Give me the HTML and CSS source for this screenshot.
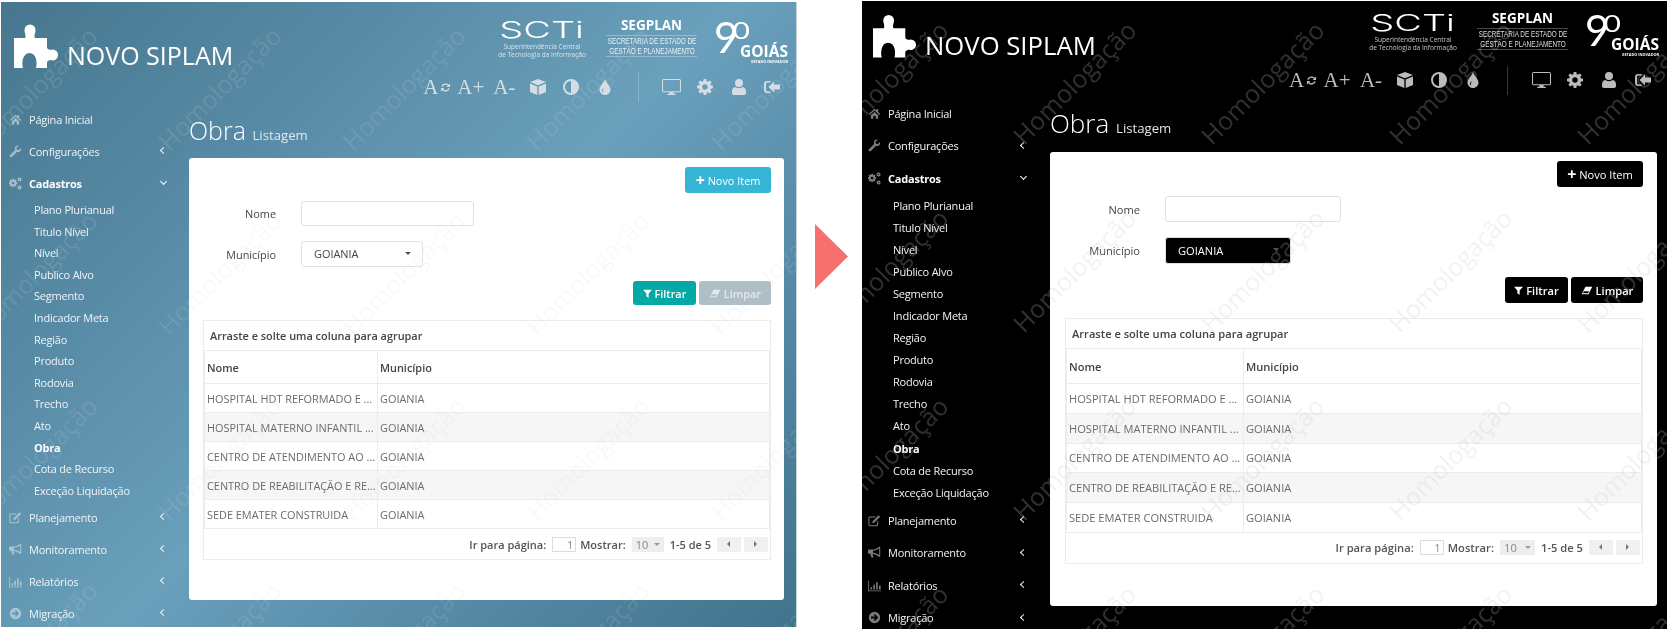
FILE: index.html
```html
<!DOCTYPE html>
<html>

<head>
    <meta charset="utf-8">
    <title>Novo Siplam - Obra</title>
    <link rel="stylesheet" href="styles.css">
</head>

<body>
    <svg class="sprite" xmlns="http://www.w3.org/2000/svg">
        <symbol id="i-puzzle" viewBox="0 0 48 44"><path d="M1 14H12C13.500 11.500 11.500 9.500 11.500 6A5.500 5.500 0 1 1 22.500 6C22.500 9.500 20.500 11.500 22 14H34V24C36.500 26.500 38 26 39.500 25.500A5.500 5.500 0 1 1 39.500 36.500C38 36 36.500 35.500 34 38V44H23C24.500 39 23.500 29 16.500 29C9.500 29 8.500 39 10 44H1Z"/></symbol>
        <symbol id="i-home" viewBox="0 0 16 16"><path d="M8 2 1 8.500 2 9.700 8 4.300 14 9.700 15 8.500 12.500 6.200V2.500H10.500V4.400ZM3.500 10 8 6 12.500 10V14.500H9.500V11H6.500V14.500H3.500Z"/></symbol>
        <symbol id="i-wrench" viewBox="0 0 16 16"><path d="M14.800 3.600 12 6.300 9.800 5.700 9.200 3.500 12 .9C9.900.200 7.300 1.500 7.200 4.200 7.200 5 7.400 5.600 7.600 6.200L1.300 12.400C.6 13.100.7 14.200 1.300 14.800 2 15.400 3 15.400 3.600 14.700L9.800 8.500C12.500 9.400 15.600 7.200 14.800 3.600Z"/></symbol>
        <symbol id="i-cogs" viewBox="0 0 16 16"><path fill-rule="evenodd" d="M6 3.500 7 3.800 8 3 9.300 4.300 8.600 5.300 9 6.300 10.200 6.500V8.300L9 8.500 8.600 9.500 9.300 10.500 8 11.800 7 11.100 6 11.500 5.800 12.700H4.200L4 11.500 3 11.100 2 11.800.7 10.500 1.400 9.500 1 8.500-.2 8.300V6.500L1 6.300 1.400 5.300.7 4.300 2 3 3 3.800 4 3.500 4.200 2.300H5.800ZM5 5.700A1.700 1.700 0 1 0 5 9.100 1.700 1.700 0 1 0 5 5.700Z"/><path fill-rule="evenodd" d="M13 .5A2.500 2.500 0 1 0 13 5.500 2.500 2.500 0 1 0 13 .5ZM13 2.200A.8.8 0 1 1 13 3.800.8.800 0 1 1 13 2.200ZM13 10.500A2.500 2.500 0 1 0 13 15.500 2.500 2.500 0 1 0 13 10.500ZM13 12.200A.8.8 0 1 1 13 13.800.8.800 0 1 1 13 12.200Z"/></symbol>
        <symbol id="i-edit" viewBox="0 0 16 16"><path d="M2.500 3H9.500L8.300 4.200H2.800C2.200 4.200 1.700 4.700 1.700 5.300V12.700C1.700 13.300 2.200 13.800 2.800 13.800H10.200C10.800 13.800 11.300 13.300 11.300 12.700V9.500L12.500 8.300V13C12.500 14.200 11.600 15 10.500 15H2.500C1.300 15 .5 14.200 .5 13V5C.5 3.800 1.300 3 2.500 3ZM13 1.500 15 3.500 8 10.500 5 11.500 6 8.500Z"/></symbol>
        <symbol id="i-bullhorn" viewBox="0 0 16 16"><path fill-rule="evenodd" d="M15 1V13L14.200 13.500C11.500 11.300 8.500 10 5.500 9.700L6.800 14H4.300L2.800 9.600H1.500C.7 9.600 0 8.900 0 8V6C0 5.100.7 4.400 1.500 4.400H5C8.500 4.400 11.500 3 14.200.6ZM13.800 3C11.500 4.600 9 5.500 6.300 5.700V8.400C9 8.700 11.500 9.600 13.800 11.200Z"/></symbol>
        <symbol id="i-chart" viewBox="0 0 16 16"><path d="M0 2H1V14H16V15H0ZM3 10H5V13H3ZM6.500 7H8.500V13H6.500ZM10 4H12V13H10ZM13.500 8H15.500V13H13.500Z"/></symbol>
        <symbol id="i-circle-right" viewBox="0 0 16 16"><path fill-rule="evenodd" d="M8 1A7 7 0 1 0 8 15 7 7 0 1 0 8 1ZM8.500 3.800 12.700 8 8.500 12.200 7.200 10.900 9 9.100H3.600V6.900H9L7.200 5.100Z"/></symbol>
        <symbol id="i-cube" viewBox="0 0 16 16"><path d="M8 0 16 3 8 6.200 0 3ZM0 4.500 7.300 7.500V16L0 13ZM16 4.500V13L8.700 16V7.500Z"/></symbol>
        <symbol id="i-contrast" viewBox="0 0 16 16"><path fill-rule="evenodd" d="M8 0A8 8 0 1 0 8 16 8 8 0 1 0 8 0ZM8 2V14A6 6 0 1 1 8 2Z"/></symbol>
        <symbol id="i-drop" viewBox="0 0 11 16"><path fill-rule="evenodd" d="M5.500 0C6.500 3.500 11 7 11 10.500 11 13.600 8.500 16 5.500 16 2.500 16 0 13.600 0 10.500 0 7 4.500 3.500 5.500 0ZM4.400 8.800C3.200 9.800 2.500 10.800 2.500 11.800 2.500 12.700 3 13.300 3.700 13.500 3.300 12.300 3.500 10.700 4.400 8.800Z"/></symbol>
        <symbol id="i-monitor" viewBox="0 0 18 16"><path fill-rule="evenodd" d="M1.500 0H16.500C17.300 0 18 .7 18 1.500V11C18 11.800 17.300 12.500 16.500 12.500H11V14H13V15H5V14H7V12.500H1.500C.7 12.500 0 11.800 0 11V1.500C0 .7.7 0 1.500 0ZM1 1V11.500H17V1Z"/></symbol>
        <symbol id="i-cog" viewBox="0 0 16 16"><path fill-rule="evenodd" d="M6.700 0H9.300L9.700 2.200 10.900 2.700 12.800 1.400 14.600 3.200 13.300 5.100 13.800 6.300 16 6.700V9.300L13.800 9.700 13.300 10.900 14.600 12.800 12.800 14.600 10.900 13.300 9.700 13.800 9.300 16H6.700L6.300 13.800 5.100 13.300 3.200 14.600 1.400 12.800 2.700 10.900 2.200 9.700 0 9.300V6.700L2.200 6.300 2.700 5.100 1.400 3.200 3.200 1.400 5.100 2.700 6.300 2.200ZM8 5.300A2.700 2.700 0 1 0 8 10.700 2.700 2.700 0 1 0 8 5.300Z"/></symbol>
        <symbol id="i-user" viewBox="0 0 14 16"><path d="M7 0A4 4 0 1 1 7 8 4 4 0 1 1 7 0ZM3.500 8C5.500 9.700 8.500 9.700 10.500 8 12.800 8.300 14 10 14 12.500V14C14 15.200 13.200 16 12 16H2C.8 16 0 15.200 0 14V12.500C0 10 1.200 8.300 3.500 8Z"/></symbol>
        <symbol id="i-signout" viewBox="0 0 16 16"><path d="M10 2.500V5.500H16V10.500H10V13.500L4.500 8ZM3 2H6.500V3.500H3.500C2.700 3.500 2 4.200 2 5V11C2 11.800 2.700 12.500 3.500 12.500H6.500V14H3C1.300 14 0 12.700 0 11V5C0 3.300 1.300 2 3 2Z"/></symbol>
        <symbol id="i-filter" viewBox="0 0 12 12"><path d="M0 1H12L7.500 6V11.500L4.500 10V6Z"/></symbol>
        <symbol id="i-eraser" viewBox="0 0 14 12"><path d="M5 1H14L9 11H0ZM1.500 9.800H8.300L9.600 7H3Z"/></symbol>
        <symbol id="i-refresh" viewBox="0 0 12 12"><path d="M6 1.500C7.500 1.500 8.700 2.100 9.500 3L11 1.700V5.500H7.200L8.600 4.100C8 3.400 7.100 3 6 3 4.500 3 3.300 3.900 2.800 5.200L1.400 4.800C2 2.900 3.800 1.500 6 1.500ZM1 6.500H4.800L3.400 7.900C4 8.600 4.900 9 6 9 7.500 9 8.700 8.100 9.200 6.800L10.600 7.200C10 9.100 8.200 10.500 6 10.500 4.500 10.500 3.300 9.900 2.500 9L1 10.300Z"/></symbol>
    </svg>

    <section class="screen screen-blue">
        <header class="topbar">
            <div class="brand">
                <svg class="brand-icon"><use href="#i-puzzle"/></svg>
                <span class="brand-name">NOVO SIPLAM</span>
            </div>
            <div class="top-right">
                <div class="logos">
                    <div class="logo-scti">
                        <div class="scti-name"><span>SCTi</span></div>
                        <div class="scti-sub">Superintendência Central<br>de Tecnologia da Informação</div>
                    </div>
                    <div class="logo-segplan">
                        <div class="segplan-name">SEGPLAN</div>
                        <div class="segplan-sub"><span>SECRETARIA DE ESTADO DE<br>GESTÃO E PLANEJAMENTO</span></div>
                    </div>
                    <div class="logo-goias">
                        <span class="goias-num">9<span>0</span></span>
                        <span class="goias-text"><b>GOIÁS</b><small>ESTADO INOVADOR</small></span>
                    </div>
                </div>
                <div class="tools">
                    <span class="tool tool-font">A<svg class="tool-refresh"><use href="#i-refresh"/></svg></span>
                    <span class="tool tool-font">A+</span>
                    <span class="tool tool-font">A-</span>
                    <span class="tool"><svg class="tool-icon"><use href="#i-cube"/></svg></span>
                    <span class="tool"><svg class="tool-icon"><use href="#i-contrast"/></svg></span>
                    <span class="tool"><svg class="tool-icon"><use href="#i-drop"/></svg></span>
                    <span class="tool"><i class="tool-sep"></i></span>
                    <span class="tool"><svg class="tool-icon tool-wide"><use href="#i-monitor"/></svg></span>
                    <span class="tool"><svg class="tool-icon"><use href="#i-cog"/></svg></span>
                    <span class="tool"><svg class="tool-icon"><use href="#i-user"/></svg></span>
                    <span class="tool"><svg class="tool-icon"><use href="#i-signout"/></svg></span>
                </div>
            </div>
        </header>

        <div class="layout">
            <nav class="sidebar">
                <a class="nav-item"><svg class="nav-icon"><use href="#i-home"/></svg>Página Inicial</a>
                <a class="nav-item has-sub"><svg class="nav-icon"><use href="#i-wrench"/></svg>Configurações</a>
                <a class="nav-item has-sub open"><svg class="nav-icon"><use href="#i-cogs"/></svg>Cadastros</a>
                <a class="sub-item">Plano Plurianual</a>
                <a class="sub-item">Titulo Nível</a>
                <a class="sub-item">Nível</a>
                <a class="sub-item">Publico Alvo</a>
                <a class="sub-item">Segmento</a>
                <a class="sub-item">Indicador Meta</a>
                <a class="sub-item">Região</a>
                <a class="sub-item">Produto</a>
                <a class="sub-item">Rodovia</a>
                <a class="sub-item">Trecho</a>
                <a class="sub-item">Ato</a>
                <a class="sub-item active">Obra</a>
                <a class="sub-item">Cota de Recurso</a>
                <a class="sub-item">Exceção Liquidação</a>
                <a class="nav-item has-sub"><svg class="nav-icon"><use href="#i-edit"/></svg>Planejamento</a>
                <a class="nav-item has-sub"><svg class="nav-icon"><use href="#i-bullhorn"/></svg>Monitoramento</a>
                <a class="nav-item has-sub"><svg class="nav-icon"><use href="#i-chart"/></svg>Relatórios</a>
                <a class="nav-item has-sub"><svg class="nav-icon"><use href="#i-circle-right"/></svg>Migração</a>
            </nav>

            <main class="content">
                <h1 class="page-title">Obra <small>Listagem</small></h1>
                <div class="card">
                    <div class="card-top">
                        <button class="btn btn-new"><b>+</b> Novo Item</button>
                    </div>
                    <div class="field field-name">
                        <label>Nome</label>
                        <div class="input"></div>
                    </div>
                    <div class="field field-city">
                        <label>Município</label>
                        <div class="select">GOIANIA</div>
                    </div>
                    <div class="form-actions">
                        <button class="btn btn-filter"><svg class="btn-icon"><use href="#i-filter"/></svg> Filtrar</button>
                        <button class="btn btn-clear"><svg class="btn-icon btn-icon-wide"><use href="#i-eraser"/></svg> Limpar</button>
                    </div>
                    <div class="grid-box">
                        <div class="group-bar">Arraste e solte uma coluna para agrupar</div>
                        <table class="grid">
                            <thead>
                                <tr><th>Nome</th><th>Município</th></tr>
                            </thead>
                            <tbody>
                                <tr><td>HOSPITAL HDT REFORMADO E ...</td><td>GOIANIA</td></tr>
                                <tr><td>HOSPITAL MATERNO INFANTIL ...</td><td>GOIANIA</td></tr>
                                <tr><td>CENTRO DE ATENDIMENTO AO ...</td><td>GOIANIA</td></tr>
                                <tr><td>CENTRO DE REABILITAÇÃO E RE...</td><td>GOIANIA</td></tr>
                                <tr><td>SEDE EMATER CONSTRUIDA</td><td>GOIANIA</td></tr>
                            </tbody>
                        </table>
                        <div class="pager">
                            <span>Ir para página:</span>
                            <span class="pager-input">1</span>
                            <span>Mostrar:</span>
                            <span class="pager-select">10</span>
                            <span class="pager-count">1-5 de 5</span>
                            <span class="pager-btn pager-prev"></span>
                            <span class="pager-btn pager-next"></span>
                        </div>
                    </div>
                </div>
            </main>
        </div>

        <div class="watermark">
            <span>Homologação</span><span>Homologação</span><span>Homologação</span><span>Homologação</span><span>Homologação</span>
            <span>Homologação</span><span>Homologação</span><span>Homologação</span><span>Homologação</span><span>Homologação</span>
            <span>Homologação</span><span>Homologação</span><span>Homologação</span><span>Homologação</span><span>Homologação</span>
            <span>Homologação</span><span>Homologação</span><span>Homologação</span><span>Homologação</span><span>Homologação</span>
        </div>
    </section>

    <div class="arrow"></div>

    <section class="screen screen-black">
        <header class="topbar">
            <div class="brand">
                <svg class="brand-icon"><use href="#i-puzzle"/></svg>
                <span class="brand-name">NOVO SIPLAM</span>
            </div>
            <div class="top-right">
                <div class="logos">
                    <div class="logo-scti">
                        <div class="scti-name"><span>SCTi</span></div>
                        <div class="scti-sub">Superintendência Central<br>de Tecnologia da Informação</div>
                    </div>
                    <div class="logo-segplan">
                        <div class="segplan-name">SEGPLAN</div>
                        <div class="segplan-sub"><span>SECRETARIA DE ESTADO DE<br>GESTÃO E PLANEJAMENTO</span></div>
                    </div>
                    <div class="logo-goias">
                        <span class="goias-num">9<span>0</span></span>
                        <span class="goias-text"><b>GOIÁS</b><small>ESTADO INOVADOR</small></span>
                    </div>
                </div>
                <div class="tools">
                    <span class="tool tool-font">A<svg class="tool-refresh"><use href="#i-refresh"/></svg></span>
                    <span class="tool tool-font">A+</span>
                    <span class="tool tool-font">A-</span>
                    <span class="tool"><svg class="tool-icon"><use href="#i-cube"/></svg></span>
                    <span class="tool"><svg class="tool-icon"><use href="#i-contrast"/></svg></span>
                    <span class="tool"><svg class="tool-icon"><use href="#i-drop"/></svg></span>
                    <span class="tool"><i class="tool-sep"></i></span>
                    <span class="tool"><svg class="tool-icon tool-wide"><use href="#i-monitor"/></svg></span>
                    <span class="tool"><svg class="tool-icon"><use href="#i-cog"/></svg></span>
                    <span class="tool"><svg class="tool-icon"><use href="#i-user"/></svg></span>
                    <span class="tool"><svg class="tool-icon"><use href="#i-signout"/></svg></span>
                </div>
            </div>
        </header>

        <div class="layout">
            <nav class="sidebar">
                <a class="nav-item"><svg class="nav-icon"><use href="#i-home"/></svg>Página Inicial</a>
                <a class="nav-item has-sub"><svg class="nav-icon"><use href="#i-wrench"/></svg>Configurações</a>
                <a class="nav-item has-sub open"><svg class="nav-icon"><use href="#i-cogs"/></svg>Cadastros</a>
                <a class="sub-item">Plano Plurianual</a>
                <a class="sub-item">Titulo Nível</a>
                <a class="sub-item">Nível</a>
                <a class="sub-item">Publico Alvo</a>
                <a class="sub-item">Segmento</a>
                <a class="sub-item">Indicador Meta</a>
                <a class="sub-item">Região</a>
                <a class="sub-item">Produto</a>
                <a class="sub-item">Rodovia</a>
                <a class="sub-item">Trecho</a>
                <a class="sub-item">Ato</a>
                <a class="sub-item active">Obra</a>
                <a class="sub-item">Cota de Recurso</a>
                <a class="sub-item">Exceção Liquidação</a>
                <a class="nav-item has-sub"><svg class="nav-icon"><use href="#i-edit"/></svg>Planejamento</a>
                <a class="nav-item has-sub"><svg class="nav-icon"><use href="#i-bullhorn"/></svg>Monitoramento</a>
                <a class="nav-item has-sub"><svg class="nav-icon"><use href="#i-chart"/></svg>Relatórios</a>
                <a class="nav-item has-sub"><svg class="nav-icon"><use href="#i-circle-right"/></svg>Migração</a>
            </nav>

            <main class="content">
                <h1 class="page-title">Obra <small>Listagem</small></h1>
                <div class="card">
                    <div class="card-top">
                        <button class="btn btn-new"><b>+</b> Novo Item</button>
                    </div>
                    <div class="field field-name">
                        <label>Nome</label>
                        <div class="input"></div>
                    </div>
                    <div class="field field-city">
                        <label>Município</label>
                        <div class="select">GOIANIA</div>
                    </div>
                    <div class="form-actions">
                        <button class="btn btn-filter"><svg class="btn-icon"><use href="#i-filter"/></svg> Filtrar</button>
                        <button class="btn btn-clear"><svg class="btn-icon btn-icon-wide"><use href="#i-eraser"/></svg> Limpar</button>
                    </div>
                    <div class="grid-box">
                        <div class="group-bar">Arraste e solte uma coluna para agrupar</div>
                        <table class="grid">
                            <thead>
                                <tr><th>Nome</th><th>Município</th></tr>
                            </thead>
                            <tbody>
                                <tr><td>HOSPITAL HDT REFORMADO E ...</td><td>GOIANIA</td></tr>
                                <tr><td>HOSPITAL MATERNO INFANTIL ...</td><td>GOIANIA</td></tr>
                                <tr><td>CENTRO DE ATENDIMENTO AO ...</td><td>GOIANIA</td></tr>
                                <tr><td>CENTRO DE REABILITAÇÃO E RE...</td><td>GOIANIA</td></tr>
                                <tr><td>SEDE EMATER CONSTRUIDA</td><td>GOIANIA</td></tr>
                            </tbody>
                        </table>
                        <div class="pager">
                            <span>Ir para página:</span>
                            <span class="pager-input">1</span>
                            <span>Mostrar:</span>
                            <span class="pager-select">10</span>
                            <span class="pager-count">1-5 de 5</span>
                            <span class="pager-btn pager-prev"></span>
                            <span class="pager-btn pager-next"></span>
                        </div>
                    </div>
                </div>
            </main>
        </div>

        <div class="watermark">
            <span>Homologação</span><span>Homologação</span><span>Homologação</span><span>Homologação</span><span>Homologação</span>
            <span>Homologação</span><span>Homologação</span><span>Homologação</span><span>Homologação</span><span>Homologação</span>
            <span>Homologação</span><span>Homologação</span><span>Homologação</span><span>Homologação</span><span>Homologação</span>
            <span>Homologação</span><span>Homologação</span><span>Homologação</span><span>Homologação</span><span>Homologação</span>
        </div>
    </section>
</body>

</html>
```

FILE: styles.css
```css
html, body {
    margin: 0;
    height: 100%;
}

body {
    display: flex;
    align-items: flex-start;
    width: 1667px;
    height: 629px;
    overflow: hidden;
    background: #fff;
    font-family: "Open Sans", "Liberation Sans", sans-serif;
    font-size: 12px;
    color: #444;
}

.sprite {
    position: absolute;
    width: 0;
    height: 0;
}

svg {
    fill: currentColor;
}

/* the two mockups share their markup, only the measures differ */
.screen {
    position: relative;
    flex: none;
    overflow: hidden;
    color: #f0f4f6;
    filter: blur(.45px);
}

.screen-blue {
    --top-h: 101px;
    --brand-top: 20px;
    --brand-left: 12px;
    --brand-size: 25px;
    --brand-line: 26px;
    --puzzle-w: 48px;
    --puzzle-h: 44px;
    --nav-h: 32px;
    --sub-h: 21.600px;
    --nav-left: 8px;
    --nav-text: 28px;
    --sub-text: 33px;
    --chevron: 23px;
    --pad-r: 12px;
    --title-h: 55px;
    --title-pad: 7px;
    --title-size: 25px;
    --card-h: 442px;
    --card-r: 13px;
    --card-l: 14px;
    --col-1: 173px;
    --row-h: 29px;
    --tool-w: 33.500px;
    --text-size: 10.900px;
    --wm-left: -58px;
    --wm-top: -7px;
    --wm-w: 184px;
    --wm-h: 185px;
    --wm-color: rgba(205, 215, 222, .15);
    width: 796px;
    height: 625px;
    margin: 2px 0 0 1px;
    border-right: 1px solid #c6d6df;
    box-sizing: border-box;
    background: linear-gradient(135deg, #47778f 0%, #588ba6 28%, #6aa0bb 52%, #5b90ac 68%, #42738c 100%);
}

.screen-black {
    --top-h: 96px;
    --brand-top: 11px;
    --brand-left: 10px;
    --brand-size: 25.700px;
    --brand-line: 24px;
    --puzzle-w: 47px;
    --puzzle-h: 44px;
    --nav-h: 32.500px;
    --sub-h: 22.100px;
    --nav-left: 6px;
    --nav-text: 26px;
    --sub-text: 31px;
    --chevron: 24px;
    --pad-r: 10px;
    --title-h: 55px;
    --title-pad: 6px;
    --title-size: 26px;
    --card-h: 454px;
    --card-r: 14px;
    --card-l: 15px;
    --col-1: 177px;
    --row-h: 29.800px;
    --tool-w: 34px;
    --text-size: 11.100px;
    --wm-left: -70px;
    --wm-top: -13px;
    --wm-w: 188px;
    --wm-h: 188px;
    --wm-color: rgba(200, 200, 200, .24);
    width: 805px;
    height: 628px;
    margin: 1px 0 0 0;
    background: #000;
}

.arrow {
    flex: none;
    width: 33px;
    height: 65px;
    margin: 224px 14px 0 18px;
    background: #f8706e;
    clip-path: polygon(0 0, 100% 50%, 0 100%);
}

/* top */
.topbar {
    display: flex;
    justify-content: space-between;
    height: var(--top-h);
    box-sizing: border-box;
    padding: var(--brand-top) 4px 0 var(--brand-left);
}

.brand {
    display: flex;
    align-items: flex-end;
    height: 46px;
}

.brand-icon {
    flex: none;
    width: var(--puzzle-w);
    height: var(--puzzle-h);
    fill: #fff;
}

.brand-name {
    margin-left: 6px;
    font-size: var(--brand-size);
    line-height: var(--brand-line);
    color: #fff;
}

.top-right {
    width: 374px;
    margin-top: -3px;
}

.screen-black .top-right {
    margin-top: 0;
}

.logos {
    display: flex;
    justify-content: flex-end;
    align-items: flex-start;
    height: 47px;
    padding-right: 4px;
    color: #fff;
}

.logo-scti {
    width: 90px;
    text-align: center;
}

.scti-name {
    height: 24px;
    font-family: Inter, "Liberation Sans", sans-serif;
    font-weight: 300;
    font-size: 23px;
    line-height: 22px;
}

.scti-name span {
    display: inline-block;
    transform: scaleX(1.650);
}

.scti-sub {
    font-size: 6.500px;
    line-height: 8px;
    opacity: .75;
    white-space: nowrap;
}

.logo-segplan {
    width: 91px;
    margin-left: 19px;
    text-align: center;
}

.segplan-name {
    font-weight: 700;
    font-size: 13.500px;
    line-height: 15px;
    margin-top: -1px;
}

.segplan-sub {
    margin-top: 2px;
    border-top: 1px solid rgba(255, 255, 255, .35);
    border-bottom: 1px solid rgba(255, 255, 255, .35);
    font-family: "Liberation Sans", sans-serif;
    font-size: 8.500px;
    line-height: 10px;
    white-space: nowrap;
    opacity: .85;
}

.segplan-sub span {
    display: block;
    width: 120px;
    margin-left: -14.500px;
    transform: scaleX(.750);
}

.logo-goias {
    position: relative;
    width: 74px;
    height: 44px;
    margin-left: 17px;
}

.goias-num {
    display: block;
    font-family: Lato, sans-serif;
    font-size: 42px;
    line-height: 36px;
    letter-spacing: -2px;
}

.goias-num span {
    position: relative;
    top: -2px;
    display: inline-block;
    margin-left: -2px;
    font-size: 24px;
    line-height: 24px;
    vertical-align: 12px;
    transform: scaleX(1.250);
}

.goias-text {
    position: absolute;
    right: 0;
    top: 24px;
    text-align: right;
}

.goias-text b {
    display: block;
    font-size: 15.500px;
    line-height: 16px;
}

.goias-text small {
    display: block;
    font-size: 3.800px;
    line-height: 5px;
    font-weight: 700;
    white-space: nowrap;
}

.tools {
    display: flex;
    justify-content: flex-end;
    align-items: center;
    height: 30px;
    margin-top: 6px;
    padding-right: 3px;
    color: #d3dde3;
}

.screen-black .tools {
    color: #bbb;
}

.tool {
    flex: none;
    display: flex;
    justify-content: center;
    align-items: center;
    width: var(--tool-w);
    font-family: "Liberation Serif", serif;
    font-size: 21px;
    line-height: 24px;
}

.tool-refresh {
    width: 11px;
    height: 11px;
    margin-left: 2px;
}

.tool-icon {
    width: 16px;
    height: 16px;
}

.tool-wide {
    width: 19px;
    height: 17px;
}

.tool-sep {
    width: 1px;
    height: 29px;
    background: rgba(255, 255, 255, .22);
}

/* menu */
.layout {
    display: flex;
}

.sidebar {
    flex: none;
    width: 188px;
    box-sizing: border-box;
}

.nav-item {
    position: relative;
    display: flex;
    align-items: center;
    height: var(--nav-h);
    padding-left: var(--nav-left);
    font-size: 11px;
    letter-spacing: -.22px;
}

.nav-icon {
    flex: none;
    width: 13px;
    height: 13px;
    margin-right: calc(var(--nav-text) - var(--nav-left) - 13px);
    opacity: .5;
}

.nav-item.open {
    font-weight: 700;
    color: #fff;
}

.nav-item.has-sub::after {
    content: "";
    position: absolute;
    right: var(--chevron);
    top: 50%;
    width: 4px;
    height: 4px;
    margin-top: -3px;
    border-left: 1.500px solid currentColor;
    border-bottom: 1.500px solid currentColor;
    transform: rotate(45deg);
}

.nav-item.open::after {
    margin-top: -4px;
    border-width: 1px;
    transform: rotate(-45deg);
}

.sub-item {
    display: block;
    height: var(--sub-h);
    padding-left: var(--sub-text);
    font-size: 11px;
    letter-spacing: -.22px;
    line-height: var(--sub-h);
}

.sub-item.active {
    font-weight: 700;
    color: #fff;
}

/* content */
.content {
    flex: 1;
    min-width: 0;
    padding-right: var(--pad-r);
}

.page-title {
    height: var(--title-h);
    box-sizing: border-box;
    margin: 0;
    padding-top: var(--title-pad);
    font-size: var(--title-size);
    font-weight: 300;
    line-height: 40px;
    color: #fff;
}

.page-title small {
    font-size: 13.200px;
    font-weight: 400;
    color: #dfe8ed;
}

.card {
    height: var(--card-h);
    box-sizing: border-box;
    padding: 9px var(--card-r) 0 var(--card-l);
    background: #fff;
    border-radius: 3px;
    color: #444;
    font-size: var(--text-size);
}

.card-top,
.form-actions {
    display: flex;
    justify-content: flex-end;
    gap: 3px;
}

.btn {
    height: 26px;
    padding: 0;
    border: 0;
    border-radius: 3px;
    font: 600 var(--text-size) "Open Sans", sans-serif;
    color: #fff;
    white-space: nowrap;
}

.btn b {
    font-size: 16px;
    line-height: 12px;
    vertical-align: -1px;
}

.btn-new {
    width: 86px;
    background: #36b6d6;
    font-weight: 400;
}

.btn-filter {
    width: 63px;
    height: 24px;
    background: #04a8a4;
}

.btn-clear {
    width: 72px;
    height: 24px;
    background: #aebdc6;
    color: #e4e9ec;
}

.btn-icon {
    width: 9px;
    height: 9px;
}

.btn-icon-wide {
    width: 12px;
}

.screen-black .btn-new,
.screen-black .btn-filter,
.screen-black .btn-clear,
.screen-black .select {
    background: #000;
    color: #fff;
}

.screen-black .btn-filter,
.screen-black .btn-clear {
    height: 26px;
}

.field {
    display: flex;
    align-items: center;
}

.field label {
    flex: none;
    width: 73px;
    text-align: right;
}

.screen-black .field label {
    width: 75px;
}

.input,
.select {
    box-sizing: border-box;
    margin-left: 25px;
    border: 1px solid #dbe2e8;
    border-radius: 3px;
}

.input {
    width: 173px;
    height: 25px;
}

.select {
    position: relative;
    width: 122px;
    height: 26px;
    padding-left: 12px;
    line-height: 24px;
}

.select::after {
    content: "";
    position: absolute;
    right: 11px;
    top: 10px;
    border: 3.500px solid transparent;
    border-top-color: #555;
    border-bottom-width: 0;
}

.field-name {
    margin-top: 8px;
}

.field-city {
    margin-top: 15px;
}

.form-actions {
    margin-top: 14px;
}

.screen-black .field-name {
    margin-top: 9px;
}

.screen-black .field-city {
    margin-top: 15px;
}

.screen-black .input {
    width: 176px;
    height: 26px;
}

.screen-black .select {
    width: 126px;
    height: 27px;
    line-height: 26px;
}

.screen-black .select::after {
    border-top-color: #555;
}

.screen-black .form-actions {
    margin-top: 13px;
}

.grid-box {
    margin-top: 15px;
    border: 1px solid #e8edf1;
    background: #fff;
}

.group-bar {
    height: 29px;
    padding-left: 6px;
    line-height: 29px;
    font-weight: 600;
    color: #444;
}

.grid {
    width: 100%;
    table-layout: fixed;
    border-collapse: collapse;
}

.grid th:first-child,
.grid td:first-child {
    width: var(--col-1);
}

.grid th,
.grid td {
    box-sizing: border-box;
    height: var(--row-h);
    padding: 0 2px;
    border: 1px solid #e8edf1;
    text-align: left;
    white-space: nowrap;
    overflow: hidden;
}

.grid th {
    height: 33px;
    font-weight: 600;
    color: #444;
}

.screen-black .grid th {
    height: 35px;
}

.grid td {
    color: #6b6b6b;
}

.grid tbody tr:nth-child(even) {
    background: #f6f6f6;
}

.pager {
    display: flex;
    justify-content: flex-end;
    align-items: center;
    gap: 4px;
    height: 30px;
    padding-right: 2px;
    font-weight: 600;
    font-size: 11px;
    color: #555;
}

.screen-black .pager {
    padding-right: 2px;
    font-size: 11.200px;
}

.pager-input {
    width: 24px;
    height: 15px;
    box-sizing: border-box;
    margin-left: 2px;
    border: 1px solid #dcdcdc;
    text-align: right;
    padding-right: 2px;
    font-weight: 400;
    line-height: 13px;
    color: #888;
}

.pager-select {
    position: relative;
    width: 32px;
    height: 15px;
    box-sizing: border-box;
    margin: 0 2px 0 2px;
    padding-left: 4px;
    background: #eee;
    font-weight: 400;
    line-height: 15px;
    color: #888;
}

.screen-black .pager-select {
    width: 35px;
}

.pager-select::after {
    content: "";
    position: absolute;
    right: 4px;
    top: 6px;
    border: 3.500px solid transparent;
    border-top-color: #999;
    border-bottom-width: 0;
}

.pager-btn {
    position: relative;
    width: 24px;
    height: 15px;
    background: #f0f0f0;
}

.pager-prev {
    margin-left: 2px;
}

.pager-next {
    margin-left: -1px;
}

.pager-btn::after {
    content: "";
    position: absolute;
    top: 4px;
    left: 10px;
    border: 3.500px solid transparent;
}

.pager-prev::after {
    border-right-color: #777;
    border-left-width: 0;
}

.pager-next::after {
    border-left-color: #777;
    border-right-width: 0;
}

/* homologation mark, lies over the whole screen */
.watermark {
    position: absolute;
    left: var(--wm-left);
    top: var(--wm-top);
    display: grid;
    grid-template-columns: repeat(5, var(--wm-w));
    grid-auto-rows: var(--wm-h);
    pointer-events: none;
}

.watermark span {
    display: flex;
    justify-content: center;
    align-items: center;
    transform: rotate(-45deg);
    font-size: 25px;
    color: var(--wm-color);
    white-space: nowrap;
}
```
